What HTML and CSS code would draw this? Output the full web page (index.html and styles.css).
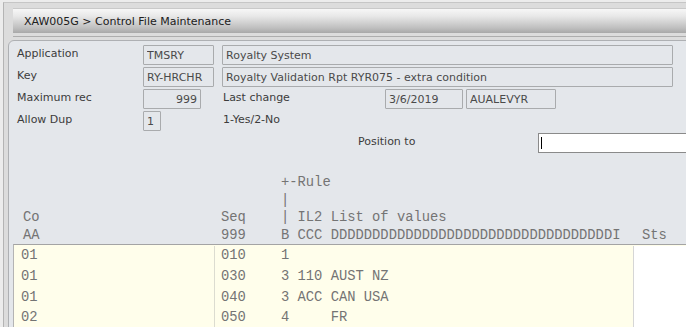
FILE: index.html
```html
<!DOCTYPE html>
<html lang="en">
<head>
    <meta charset="UTF-8">
    <title>XAW005G - Control File Maintenance</title>
    <link rel="stylesheet" href="styles.css">
</head>
<body>
    <div class="frame">
        <div class="titlebar">XAW005G &gt; Control File Maintenance</div>
        <div class="title-rule"></div>

        <div class="panel">
            <div class="form-row">
                <span class="label">Application</span>
                <input class="fld w-code" value="TMSRY" readonly>
                <input class="fld w-desc" value="Royalty System" readonly>
            </div>
            <div class="form-row">
                <span class="label">Key</span>
                <input class="fld w-code" value="RY-HRCHR" readonly>
                <input class="fld w-desc" value="Royalty Validation Rpt RYR075 - extra condition" readonly>
            </div>
            <div class="form-row">
                <span class="label">Maximum rec</span>
                <input class="fld w-num num" value="999" readonly>
                <span class="label label-change">Last change</span>
                <input class="fld w-date" value="3/6/2019" readonly>
                <input class="fld w-user" value="AUALEVYR" readonly>
            </div>
            <div class="form-row">
                <span class="label">Allow Dup</span>
                <input class="fld w-flag" value="1" readonly>
                <span class="hint">1-Yes/2-No</span>
            </div>
            <div class="form-row">
                <span class="label label-pos">Position to</span>
                <div class="pos-input"><span class="caret"></span></div>
            </div>

            <div class="list">
                <div class="list-head">
                    <div class="row">
                        <span></span><span></span><span>+-Rule</span><span></span>
                    </div>
                    <div class="row">
                        <span></span><span></span><span>|</span><span></span>
                    </div>
                    <div class="row">
                        <span class="c-co">Co</span><span class="c-seq">Seq</span><span>| IL2 List of values</span><span></span>
                    </div>
                    <div class="row">
                        <span class="c-co">AA</span><span class="c-seq">999</span><span>B CCC DDDDDDDDDDDDDDDDDDDDDDDDDDDDDDDDDDI</span><span class="c-sts">Sts</span>
                    </div>
                </div>

                <div class="list-body">
                    <div class="row">
                        <span class="c-co">01</span><span class="c-seq">010</span><span>1</span><span class="c-sts"></span>
                    </div>
                    <div class="row">
                        <span class="c-co">01</span><span class="c-seq">030</span><span>3 110 AUST NZ</span><span class="c-sts"></span>
                    </div>
                    <div class="row">
                        <span class="c-co">01</span><span class="c-seq">040</span><span>3 ACC CAN USA</span><span class="c-sts"></span>
                    </div>
                    <div class="row">
                        <span class="c-co">02</span><span class="c-seq">050</span><span>4     FR</span><span class="c-sts"></span>
                    </div>
                </div>
            </div>
        </div>
    </div>
</body>
</html>
```

FILE: styles.css
```css
html, body {
    margin: 0;
    padding: 0;
}

body {
    background-color: #ececec;
    font-family: "DejaVu Sans", Verdana, sans-serif;
    font-size: 11px;
    color: #3c3c3c;
    overflow: hidden;
    height: 327px;
}

.frame {
    margin: 2px 0 0 3px;
    border-top: 1px solid #c6c6c6;
    border-left: 1px solid #b4b4b4;
    background-color: #dcdcdc;
    height: 340px;
    overflow: hidden;
}

.titlebar {
    margin: 5px 0 0 9px;
    height: 25px;
    line-height: 25px;
    padding-left: 11px;
    font-size: 11px;
    color: #202020;
    background: linear-gradient(to bottom, #f7f7f7 0%, #e8e8e8 30%, #bebebe 80%, #a8a8a8 100%);
    border-top: 1px solid #c9c9c9;
    box-sizing: border-box;
}

.title-rule {
    margin: 3px 0 0 9px;
    height: 1px;
    background-color: #adadad;
}

.panel {
    margin: 3px 0 0 4px;
    border: 1px solid #aeb0b3;
    border-top-left-radius: 6px;
    background-color: #e4e7eb;
    padding-top: 4px;
    width: 720px;
    height: 320px;
}

.form-row {
    display: flex;
    align-items: center;
    height: 20px;
    margin-bottom: 2px;
    padding-left: 8px;
}

.label {
    width: 126px;
    flex-shrink: 0;
    color: #3c3c3c;
    position: relative;
    top: -2px;
}

.label-change {
    width: 162px;
    margin-left: 22px;
}

.label-pos {
    width: 180px;
    margin-left: 341px;
}

.hint {
    margin-left: 62px;
    position: relative;
    top: -2px;
}

.fld {
    box-sizing: border-box;
    height: 20px;
    margin: 0;
    padding: 1px 3px 0;
    border: 1px solid #a9abad;
    border-radius: 1px;
    background-color: #e4e7eb;
    font-family: "DejaVu Sans", Verdana, sans-serif;
    font-size: 11px;
    color: #4a4a4a;
    outline: none;
    flex-shrink: 0;
}

.num {
    text-align: right;
}

.w-code { width: 71px; margin-right: 8px; }
.w-desc { width: 451px; }
.w-num { width: 58px; }
.w-date { width: 78px; margin-right: 3px; }
.w-user { width: 90px; }
.w-flag { width: 18px; }

.pos-input {
    box-sizing: border-box;
    width: 170px;
    height: 20px;
    background-color: #ffffff;
    border: 1px solid #8a8a8a;
    border-right: none;
    padding: 3px 0 0 2px;
}

.caret {
    display: block;
    width: 1px;
    height: 12px;
    background-color: #000000;
}

.list {
    margin: 21px 0 0 5px;
    font-family: "Liberation Mono", "Courier New", monospace;
    font-size: 13.8px;
    color: #747474;
}

.row {
    display: grid;
    grid-template-columns: 200px 67px 352px 1fr;
    white-space: pre;
}

.list-head .row {
    height: 17.6px;
    line-height: 17.6px;
}

.list-head .c-co {
    padding-left: 9px;
}

.list-head .c-seq {
    padding-left: 7px;
}

.list-head .c-sts {
    padding-left: 9px;
}

.list-body {
    border-top: 1px solid #a4a4a4;
    border-left: 1px solid #b4b4b4;
    margin-left: -1px;
    padding-top: 1px;
    background-color: #fffeeb;
}

.list-body .row {
    height: 20.6px;
    line-height: 20.6px;
    background-color: #fffeeb;
}

.list-body .c-co {
    padding-left: 7px;
}

.list-body .c-seq {
    border-left: 1px solid #dcdcd0;
    padding-left: 6px;
}

.list-body .c-sts {
    background-color: #ffffff;
    border-left: 1px solid #d6d6d6;
}
```
